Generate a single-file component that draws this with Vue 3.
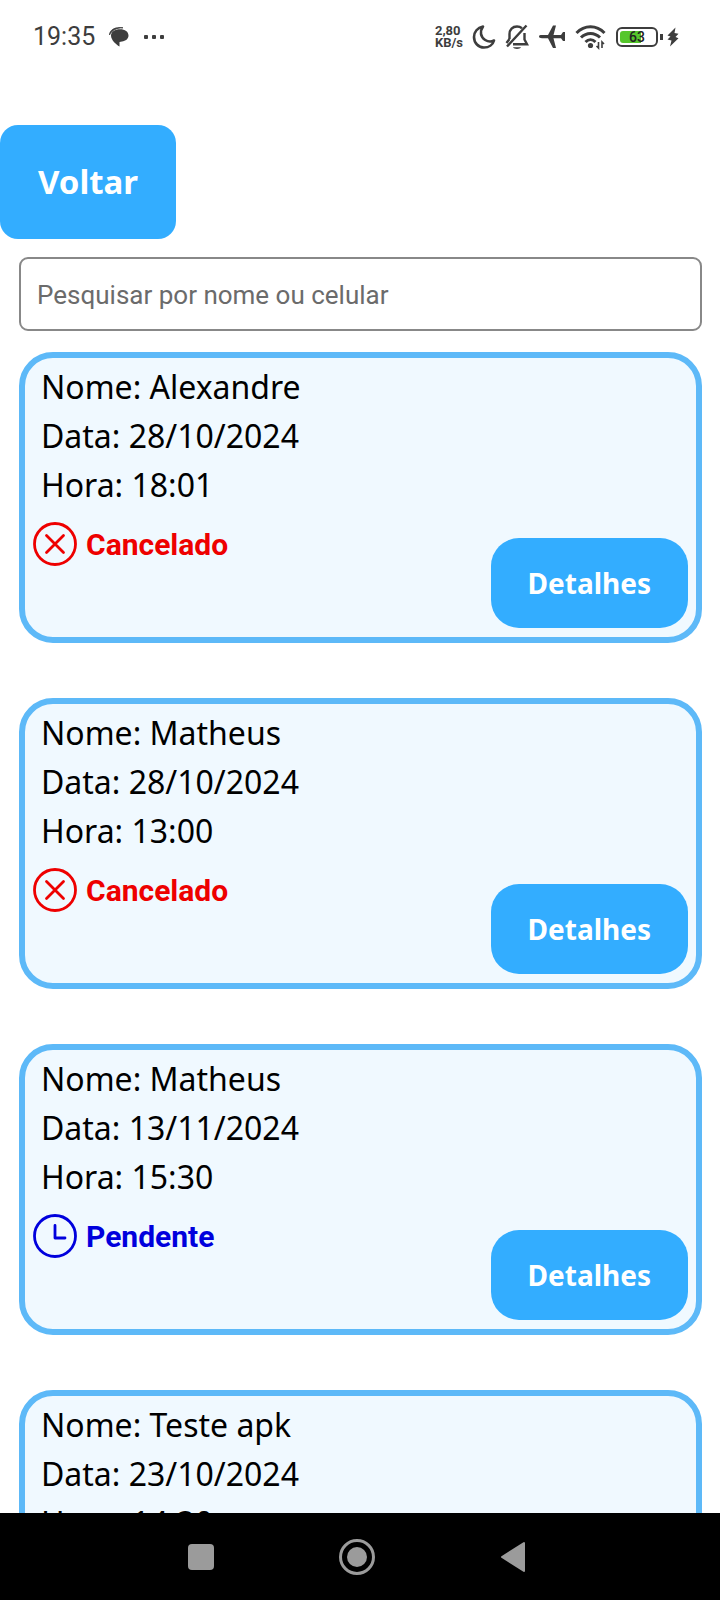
<script setup>
import { ref, computed } from 'vue'

const search = ref('')

const appointments = [
  { id: 1, name: 'Alexandre', date: '28/10/2024', time: '18:01', status: 'Cancelado' },
  { id: 2, name: 'Matheus', date: '28/10/2024', time: '13:00', status: 'Cancelado' },
  { id: 3, name: 'Matheus', date: '13/11/2024', time: '15:30', status: 'Pendente' },
  { id: 4, name: 'Teste apk', date: '23/10/2024', time: '14:30', status: 'Pendente' },
]

const visible = computed(() =>
  appointments.filter((a) => a.name.toLowerCase().includes(search.value.toLowerCase()))
)
</script>

<template>
  <div class="screen">
    <header class="status-bar">
      <div class="status-left">
        <span class="clock">19:35</span>
        <svg width="20" height="20" viewBox="0 0 20 20" aria-hidden="true">
          <path d="M0.500 8C0.500 3 6 -0.500 14 0.800C8 0.800 3 3 0.500 8Z" fill="#3d3d3d" stroke="#3d3d3d" stroke-width="0.800" />
          <path d="M11 2.200C16 2.200 19.500 4.500 19.500 8.500C19.500 12 16.500 14 13 14.500L10.500 15V19.500C7 17.500 2 13 2 8.500C2 4.500 6 2.200 11 2.200Z" fill="#3d3d3d" />
        </svg>
        <svg width="22" height="6" viewBox="0 0 22 6" aria-hidden="true">
          <g fill="#3d3d3d">
            <rect x="1" y="1" width="4" height="4" rx="1" />
            <rect x="9" y="1" width="4" height="4" rx="1" />
            <rect x="17" y="1" width="4" height="4" rx="1" />
          </g>
        </svg>
      </div>
      <div class="status-right">
        <span class="speed"><span>2,80</span><span>KB/s</span></span>
        <svg width="24" height="26" viewBox="0 0 24 26" fill="none" stroke="#3d3d3d" stroke-width="2.6" stroke-linejoin="round" aria-hidden="true">
          <path d="M11 2.500C5.500 3.500 2 8 2 13C2 19 6.500 23.500 12 23.500C17 23.500 21 20.500 22 16.500C19.500 17.800 16 17.800 13.200 16C8.500 13 7.500 7.500 11 2.500Z" />
        </svg>
        <svg width="24" height="26" viewBox="0 0 24 26" fill="none" stroke="#3d3d3d" stroke-width="2.400" aria-hidden="true">
          <path d="M4.500 15V10C4.500 5.500 7.500 2.500 12 2.500C14 2.500 15.500 3 17 4.200M19.500 9V15.500L22 20.200H8" />
          <path d="M21.500 1.500L2 22.500M1.500 19L4.500 15" />
          <path d="M8 23.200H16C15 25.500 9 25.500 8 23.200Z" fill="#3d3d3d" stroke="none" />
        </svg>
        <svg width="28" height="26" viewBox="0 0 28 26" aria-hidden="true">
          <path d="M1 12.500C1 11.200 2 11 4 11H10L15 1.500H18L15.500 11H23L25 8H27V17H25L23 14.200H15.500L18 24H15L10 14.200H4C2 14.200 1 13.800 1 12.500Z" fill="#3d3d3d" />
        </svg>
        <svg width="31" height="26" viewBox="0 0 31 26" fill="none" stroke="#3d3d3d" stroke-width="3" aria-hidden="true">
          <path d="M1.500 9C9.500 0.800 21.500 0.800 29.500 9" />
          <path d="M6 13.500C11.500 8 19.500 8 25 13.500" />
          <path d="M10.500 18C13.500 15 17.500 15 20.500 18" />
          <circle cx="15.500" cy="21.500" r="2.600" fill="#3d3d3d" stroke="none" />
          <path d="M23.500 18V24L21.500 22M27 24V18L29 20" stroke-width="1.600" />
        </svg>
        <span class="battery">
          <span class="battery-body"><span class="battery-value">63</span></span>
          <span class="battery-tip"></span>
        </span>
        <svg class="bolt" width="12" height="20" viewBox="0 0 12 20" aria-hidden="true">
          <path d="M8.500 0.500L0.500 8.500L3.500 9.600L0.500 12.500L4.500 13.500L3 19.500L11.500 11.200L8.500 10L11.500 6.800L7.500 6Z" fill="#3d3d3d" />
        </svg>
      </div>
    </header>

    <main class="content">
      <button class="back" type="button">Voltar</button>
      <input v-model="search" class="search" type="text" placeholder="Pesquisar por nome ou celular" aria-label="Pesquisar por nome ou celular" />
      <ul class="list">
        <li v-for="item in visible" :key="item.id" class="card">
          <div class="info">
            <p class="line">Nome: {{ item.name }}</p>
            <p class="line">Data: {{ item.date }}</p>
            <p class="line">Hora: {{ item.time }}</p>
            <div class="state" :class="item.status.toLowerCase()">
              <svg width="44" height="44" viewBox="0 0 44 44" fill="none" stroke="currentColor" stroke-width="2.800" stroke-linecap="round" stroke-linejoin="round" aria-hidden="true">
                <circle cx="22" cy="22" r="20.500" />
                <path v-if="item.status === 'Cancelado'" d="M13.500 13.500L30.500 30.500M30.500 13.500L13.500 30.500" />
                <path v-else d="M22 11.500V24H32" />
              </svg>
              <span>{{ item.status }}</span>
            </div>
          </div>
          <button class="details" type="button">Detalhes</button>
        </li>
      </ul>
    </main>

    <nav class="nav-bar">
      <button type="button" aria-label="Recentes">
        <svg width="36" height="36" viewBox="0 0 36 36"><rect x="5" y="5" width="26" height="26" rx="4" fill="#9b9b9b" /></svg>
      </button>
      <button type="button" aria-label="Início">
        <svg width="36" height="36" viewBox="0 0 36 36"><circle cx="18" cy="18" r="16.500" fill="none" stroke="#9b9b9b" stroke-width="3" /><circle cx="18" cy="18" r="10" fill="#9b9b9b" /></svg>
      </button>
      <button type="button" aria-label="Voltar">
        <svg width="36" height="36" viewBox="0 0 36 36"><path d="M7 18L29 4V32Z" fill="#9b9b9b" stroke="#9b9b9b" stroke-width="2" stroke-linejoin="round" /></svg>
      </button>
    </nav>
  </div>
</template>

<style>
body {
  margin: 0;
  background: #fff;
}
</style>

<style scoped>
.screen {
  display: flex;
  flex-direction: column;
  height: 100vh;
  overflow: hidden;
  background: #fff;
  font-family: "Noto Sans", sans-serif;
}

.status-bar {
  display: flex;
  flex: none;
  align-items: center;
  justify-content: space-between;
  box-sizing: border-box;
  height: 73px;
  padding: 0 41px 0 33px;
  color: #3d3d3d;
  font-family: Roboto, sans-serif;
}

.status-left,
.status-right {
  display: flex;
  align-items: center;
}

.status-left {
  gap: 14px;
}

.clock {
  font-size: 25px;
  line-height: 28px;
}

.status-right {
  gap: 9px;
}

.speed {
  display: flex;
  flex-direction: column;
  font-size: 13px;
  font-weight: 700;
  line-height: 12px;
}

.battery {
  display: flex;
  align-items: center;
  gap: 2px;
  margin-left: 1px;
}

.battery-body {
  box-sizing: border-box;
  width: 42px;
  height: 20px;
  padding: 2px;
  border: 2px solid #3d3d3d;
  border-radius: 6px;
}

.battery-value {
  display: block;
  border-radius: 3px;
  background: linear-gradient(to right, #55c62b 63%, transparent 63%);
  color: #222;
  font-size: 14px;
  font-weight: 500;
  line-height: 12px;
  text-align: center;
}

.battery-tip {
  width: 3px;
  height: 6px;
  background: #3d3d3d;
}

.bolt {
  margin-left: -5px;
}

.content {
  flex: 1;
  min-height: 0;
  padding: 52px 18px 0 19px;
  overflow: hidden;
}

button {
  border: 0;
  color: #fff;
  font-family: inherit;
  font-weight: 700;
}

.back {
  display: block;
  margin: 0 0 18px -19px;
  padding: 33px 38px;
  border-radius: 18px;
  background: #33adff;
  font-size: 33px;
  line-height: 48px;
}

.search {
  display: block;
  box-sizing: border-box;
  width: 100%;
  height: 74px;
  padding: 2px 16px 0;
  border: 2px solid #888;
  border-radius: 9px;
  background: #fff;
  color: #000;
  font-family: Roboto, sans-serif;
  font-size: 26px;
}

.search::placeholder {
  color: #6b6b6b;
  opacity: 1;
}

.list {
  display: flex;
  flex-direction: column;
  gap: 55px;
  margin: 21px 0 0;
  padding: 0;
  list-style: none;
}

.card {
  display: flex;
  align-items: flex-end;
  justify-content: space-between;
  box-sizing: border-box;
  min-height: 291px;
  padding: 4px 8px 9px;
  border: 6px solid #5db9f8;
  border-radius: 34px;
  background: #f0f9ff;
}

.info {
  align-self: flex-start;
}

.line {
  margin: 0;
  padding-left: 8px;
  color: #000;
  font-size: 32px;
  line-height: 49px;
}

.state {
  display: flex;
  align-items: center;
  gap: 9px;
  margin-top: 12px;
  font-family: Roboto, sans-serif;
  font-size: 30px;
  font-weight: 700;
  line-height: 44px;
}

.state span {
  padding-top: 2px;
}

.state svg {
  flex: none;
}

.cancelado {
  color: #ee0000;
}

.pendente {
  color: #0000dd;
}

.details {
  padding: 24px 37px;
  border-radius: 28px;
  background: #33adff;
  font-size: 28px;
  line-height: 42px;
}

.nav-bar {
  display: flex;
  flex: none;
  justify-content: center;
  box-sizing: border-box;
  height: 87px;
  padding-right: 6px;
  background: #000;
}

.nav-bar button {
  display: flex;
  align-items: center;
  justify-content: center;
  width: 156px;
  padding: 0;
  background: transparent;
}
</style>
